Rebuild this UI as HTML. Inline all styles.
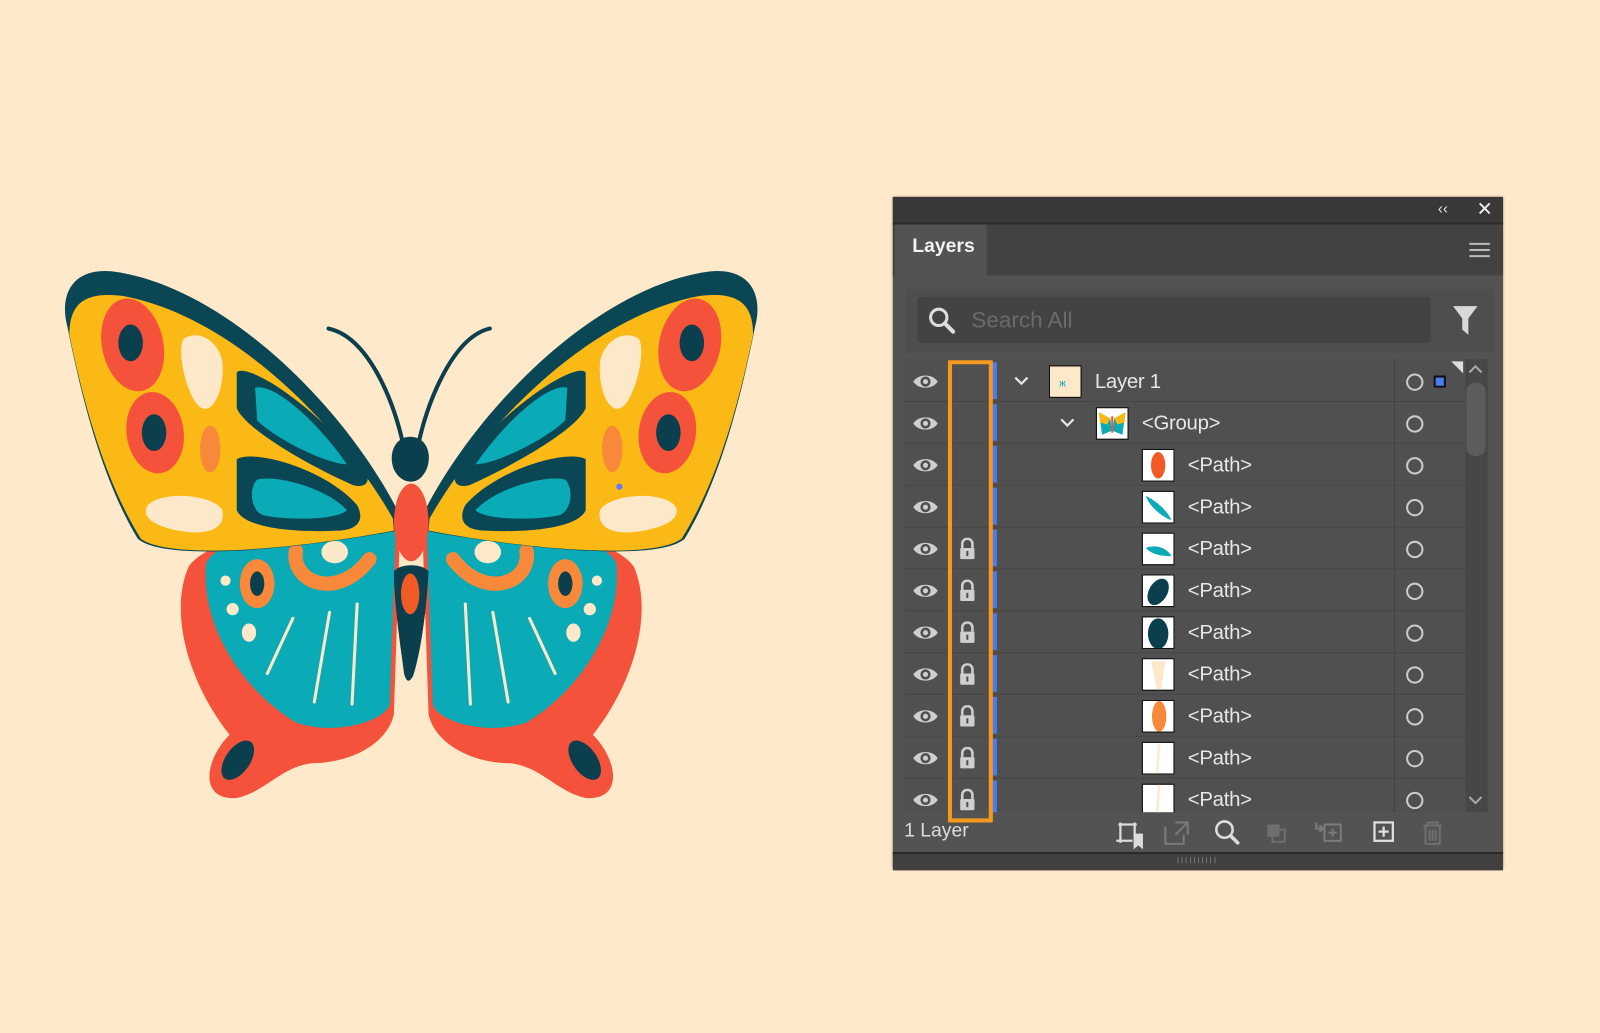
<!DOCTYPE html>
<html><head><meta charset="utf-8"><style>
html,body{margin:0;padding:0;width:1600px;height:1033px;overflow:hidden;background:#fee9cb;font-family:"Liberation Sans",sans-serif}
#w{position:absolute;left:0;top:0;width:1568px;height:1012px;transform:scale(1.0204);transform-origin:0 0}
.a{position:absolute}
.txt{color:#e6e6e6;font-size:20px;font-family:"Liberation Sans",sans-serif}
</style></head><body><div id="w">
<svg class="a" style="left:0;top:0" width="820" height="1012" viewBox="0 0 820 1012">
<defs>
<g id="wing">
 <path d="M392,520 C330,508 210,520 185,555 C165,600 185,670 225,720 C200,745 195,785 232,782 C260,776 275,752 305,748 C345,748 380,728 386,700 Z" fill="#f4523a"/>
 <path d="M388,516 C320,508 215,522 202,552 C196,610 235,675 290,708 C330,722 378,706 382,690 Z" fill="#0aabb6"/>
 <ellipse cx="233" cy="745" rx="12" ry="22" transform="rotate(35 233 745)" fill="#0b3f4d"/>
 <path d="M290,540 C285,570 330,590 362,548" fill="none" stroke="#f8883a" stroke-width="14" stroke-linecap="round"/>
 <ellipse cx="252" cy="572" rx="17" ry="24" fill="#f8883a"/>
 <ellipse cx="252" cy="572" rx="7" ry="12" fill="#0b3f4d"/>
 <ellipse cx="328" cy="541" rx="13" ry="11" fill="#fde9c9"/>
 <circle cx="221" cy="569" r="5" fill="#fde9c9"/>
 <circle cx="228" cy="597" r="6" fill="#fde9c9"/>
 <ellipse cx="244" cy="620" rx="7" ry="9" fill="#fde9c9"/>
 <path d="M287,606 L262,660 M323,600 L308,688 M350,592 L345,690" stroke="#fde9c9" stroke-width="3" stroke-linecap="round"/>
 <path d="M392,505 C340,400 220,280 110,266 C70,262 58,290 66,320 C80,390 100,470 135,528 C160,550 280,540 390,520 Z" fill="#0b4655"/>
 <path d="M385,508 C335,420 230,310 120,290 C80,285 68,300 68,328 C82,395 102,470 138,528 C165,548 280,540 386,520 Z" fill="#fbb915"/>
 <ellipse cx="130" cy="338" rx="30" ry="46" transform="rotate(-12 130 338)" fill="#f4523a"/>
 <ellipse cx="128" cy="336" rx="12" ry="18" fill="#0b3f4d"/>
 <ellipse cx="152" cy="424" rx="28" ry="40" transform="rotate(-8 152 424)" fill="#f4523a"/>
 <ellipse cx="151" cy="424" rx="12" ry="18" fill="#0b3f4d"/>
 <path d="M180,332 C195,322 215,335 218,355 C220,380 210,405 198,400 C185,395 172,345 180,332 Z" fill="#fde9c9"/>
 <ellipse cx="206" cy="440" rx="10" ry="23" fill="#f8883a"/>
 <path d="M145,495 C160,480 210,485 218,500 C222,520 200,525 175,520 C148,515 138,505 145,495 Z" fill="#fde9c9"/>
 <path d="M232,365 C240,355 300,390 350,450 C368,470 360,480 345,475 C300,455 240,420 232,400 Z" fill="#0b4655"/>
 <path d="M250,380 C265,375 305,405 340,455 C320,455 270,430 252,412 Z" fill="#0aabb6"/>
 <path d="M232,450 C250,440 320,460 350,495 C358,510 350,520 330,520 C290,522 240,518 232,500 Z" fill="#0b4655"/>
 <path d="M252,470 C270,465 320,478 340,500 C330,510 280,510 258,505 C245,500 244,478 252,470 Z" fill="#0aabb6"/>
</g>
</defs>
<use href="#wing"/>
<use href="#wing" transform="translate(806,0) scale(-1,1)"/>
<path d="M395,435 C385,390 360,330 322,322" fill="none" stroke="#0b3f4d" stroke-width="4" stroke-linecap="round"/>
<path d="M410,435 C420,390 445,330 480,322" fill="none" stroke="#0b3f4d" stroke-width="4" stroke-linecap="round"/>
<path d="M402,428 C418,428 424,445 418,460 C413,470 408,472 402,472 C396,472 390,468 386,460 C380,445 387,428 402,428 Z" fill="#0b3f4d"/>
<ellipse cx="403" cy="512" rx="17" ry="38" fill="#f4523a"/>
<path d="M386,560 C392,552 414,552 420,560 C418,600 412,640 405,662 C401,670 398,668 396,660 C392,630 386,590 386,560 Z" fill="#0b3f4d"/>
<ellipse cx="402" cy="582" rx="9" ry="20" fill="#f15a24"/>
<circle cx="607" cy="477" r="3" fill="#5b7bff"/>
</svg>

<div class="a" style="left:875px;top:193px;width:598px;height:658px;background:#535353;box-shadow:0 0 3px rgba(0,0,0,.4)">
 <div class="a" style="left:0;top:0;width:598px;height:25px;background:#383838;border-bottom:2px solid #2a2a2a"></div>
 <div class="a txt" style="left:534px;top:3px;font-size:15px;color:#ddd">‹‹</div>
 <div class="a txt" style="left:572px;top:1px;font-size:19px;color:#eee">✕</div>
 <div class="a" style="left:0;top:27px;width:598px;height:50px;background:#424242"></div>
 <div class="a" style="left:2px;top:27px;width:90px;height:52px;background:#535353"></div>
 <div class="a txt" style="left:19px;top:38px;font-weight:bold;font-size:19px;color:#f2f2f2">Layers</div>
 <div class="a" style="left:565px;top:45px;width:20px;height:2px;background:#bbb;box-shadow:0 6px 0 #bbb,0 12px 0 #bbb"></div>
 <div class="a" style="left:12px;top:90px;width:578px;height:62px;background:#4e4e4e"></div>
 <div class="a" style="left:24px;top:98px;width:503px;height:45px;background:#434343;border-radius:4px"></div>
 <svg class="a" style="left:34px;top:107px" width="28" height="28" viewBox="0 0 28 28"><circle cx="11" cy="11" r="8" fill="none" stroke="#ddd" stroke-width="3"/><path d="M17,17 L25,25" stroke="#ddd" stroke-width="4" stroke-linecap="round"/></svg>
 <div class="a txt" style="left:77px;top:108px;font-size:22px;color:#6a6a6a">Search All</div>
 <svg class="a" style="left:548px;top:106px" width="26" height="30" viewBox="0 0 26 30"><path d="M1,1 H25 L16,13 V29 L10,24 V13 Z" fill="#d8d8d8"/></svg>
 <div class="a" style="left:11px;top:159px;width:572px;height:444px;background:#505050;overflow:hidden"></div>
</div>
<div id="rows" class="a" style="left:886px;top:352px;width:572px;height:444px;overflow:hidden">
 <div class="a" style="left:480px;top:0;width:1px;height:444px;background:#434343"></div>
 <div class="a" style="left:550px;top:0;width:22px;height:444px;background:#474747"></div>
 <div class="a" style="left:551px;top:23px;width:19px;height:72px;background:#5c5c5c;border-radius:9px"></div>
 <svg class="a" style="left:552px;top:4px" width="16" height="12"><path d="M2,9 L8,3 L14,9" fill="none" stroke="#aaa" stroke-width="2"/></svg>
 <svg class="a" style="left:552px;top:426px" width="16" height="12"><path d="M2,3 L8,9 L14,3" fill="none" stroke="#aaa" stroke-width="2"/></svg>
 <svg class="a" style="left:536px;top:2px" width="12" height="12"><path d="M0,0 H12 V12 Z" fill="#ddd"/></svg>
</div>
<script>
var r=document.getElementById('rows'),h='';
var thumbs=['<rect width="30" height="30" fill="#fde9c9"/><text x="9" y="20" font-size="10" fill="#0aabb6">ж</text>',
'<rect width="30" height="30" fill="#fff"/><path d="M2,4 L13,10 L15,22 L5,26 Z M28,4 L17,10 L15,22 L25,26 Z" fill="#0aabb6"/><path d="M2,4 L13,10 L10,16 L3,14Z M28,4 L17,10 L20,16 L27,14Z" fill="#fbb915"/><rect x="14" y="8" width="2" height="16" fill="#f4523a"/>',
'<rect width="30" height="30" fill="#fff"/><ellipse cx="15" cy="15" rx="7" ry="13" fill="#f15a24"/>',
'<rect width="30" height="30" fill="#fff"/><path d="M3,4 C15,10 25,20 28,28 C18,24 6,14 3,4Z" fill="#0aabb6"/>',
'<rect width="30" height="30" fill="#fff"/><path d="M3,14 C12,10 24,14 28,22 C18,22 8,20 3,14Z" fill="#0aabb6"/>',
'<rect width="30" height="30" fill="#fff"/><ellipse cx="15" cy="16" rx="9" ry="14" transform="rotate(30 15 16)" fill="#0b3f4d"/>',
'<rect width="30" height="30" fill="#fff"/><ellipse cx="15" cy="16" rx="10" ry="15" fill="#0b3f4d"/>',
'<rect width="30" height="30" fill="#fff"/><path d="M8,2 H22 L18,30 H14 Z" fill="#fde9c9"/>',
'<rect width="30" height="30" fill="#fff"/><ellipse cx="16" cy="15" rx="7" ry="15" fill="#f8883a"/>',
'<rect width="30" height="30" fill="#fff"/><path d="M16,0 L14,30" stroke="#fde9c9" stroke-width="2"/>',
'<rect width="30" height="30" fill="#fff"/><path d="M16,0 L14,30" stroke="#fde9c9" stroke-width="2"/>'];
for(var i=0;i<11;i++){
 var y=i*41+1,cy=y+21;
 h+='<div class="a" style="left:0;top:'+(y+40)+'px;width:550px;height:1px;background:#474747"></div>';
 h+='<svg class="a" style="left:8px;top:'+(cy-9)+'px" width="26" height="18"><path d="M1,9 C6,1 20,1 25,9 C20,17 6,17 1,9Z" fill="#cfcfcf"/><circle cx="13" cy="9" r="5" fill="#505050"/><circle cx="13" cy="9" r="2.5" fill="#cfcfcf"/></svg>';
 if(i>=4) h+='<svg class="a" style="left:53px;top:'+(cy-11)+'px" width="18" height="22"><path d="M4,10 V6 A5,5 0 0 1 14,6 V10" fill="none" stroke="#cfcfcf" stroke-width="2.5"/><rect x="2" y="10" width="14" height="11" rx="1" fill="#cfcfcf"/><rect x="8" y="13" width="2" height="5" fill="#505050"/></svg>';
 h+='<div class="a" style="left:86px;top:'+(y+2)+'px;width:5px;height:36px;background:#4a7bf0"></div>';
 var tx,lbl,cx=-1;
 if(i==0){tx=187;lbl='Layer 1';cx=115}else if(i==1){tx=233;lbl='&lt;Group&gt;';cx=160}else{tx=278;lbl='&lt;Path&gt;'}
 if(cx>0) h+='<svg class="a" style="left:'+(cx-8)+'px;top:'+(cy-6)+'px" width="16" height="10"><path d="M2,2 L8,8 L14,2" fill="none" stroke="#e6e6e6" stroke-width="2.2"/></svg>';
 h+='<svg class="a" style="left:'+(tx-46)+'px;top:'+(cy-17)+'px" width="34" height="34"><rect x="1" y="1" width="32" height="32" fill="#111"/><svg x="2" y="2" width="30" height="30">'+thumbs[i]+'</svg></svg>';
 h+='<div class="a txt" style="left:'+(tx)+'px;top:'+(cy-11)+'px;font-size:20px;letter-spacing:-0.3px">'+lbl+'</div>';
 h+='<div class="a" style="left:492px;top:'+(cy-8)+'px;width:13px;height:13px;border:2px solid #ccc;border-radius:50%"></div>';
 if(i==0) h+='<div class="a" style="left:519px;top:'+(cy-6)+'px;width:8px;height:8px;background:#4a7bf0;border:2px solid #111"></div>';
}
r.innerHTML+=h;
</script>
<div class="a" style="left:929px;top:353px;width:36px;height:445px;border:4px solid #f39a1e;border-radius:1px"></div>
<div class="a txt" style="left:886px;top:804px;font-size:19px;color:#ddd">1 Layer</div>
<svg class="a" style="left:1090px;top:800px" width="330" height="32" viewBox="0 0 330 32">
 <g fill="none" stroke="#dcdcdc" stroke-width="2.2">
  <path d="M6,8 H24 M8,6 V26 M22,6 V20 M4,24 H20"/><path d="M22,18 H29 V30 L25.5,27 L22,30 Z" fill="#dcdcdc"/>
 </g>
 <g fill="none" stroke="#7a7a7a" stroke-width="2"><path d="M52,10 V27 H70 V18 M62,6 H74 V18 M74,6 L62,18"/></g>
 <circle cx="110" cy="13" r="8" fill="none" stroke="#dcdcdc" stroke-width="2.5"/><path d="M116,19 L123,26" stroke="#dcdcdc" stroke-width="3.5" stroke-linecap="round"/>
 <g fill="#6f6f6f"><rect x="152" y="8" width="12" height="12"/><rect x="157" y="13" width="12" height="12" fill="none" stroke="#6f6f6f" stroke-width="2"/></g>
 <g fill="none" stroke="#7a7a7a" stroke-width="2"><path d="M200,6 V12 H206 M203,9 L207,12 L203,15"/><rect x="208" y="8" width="16" height="16"/><path d="M216,12 V20 M212,16 H220"/></g>
 <g fill="none" stroke="#e0e0e0" stroke-width="2.2"><rect x="257" y="6" width="18" height="18"/><path d="M266,10 V20 M261,15 H271"/></g>
 <g fill="none" stroke="#6f6f6f" stroke-width="2"><path d="M305,9 H323 M309,9 V6 H319 V9 M307,9 V27 H321 V9 M311,13 V24 M314,13 V24 M317,13 V24"/></g>
</svg>
<div class="a" style="left:875px;top:835px;width:598px;height:16px;background:#404040;border-top:2px solid #2a2a2a"></div>
<div class="a" style="left:1154px;top:840px;width:38px;height:6px;background:repeating-linear-gradient(90deg,#777 0 1px,transparent 1px 4px)"></div>
</div></body></html>
